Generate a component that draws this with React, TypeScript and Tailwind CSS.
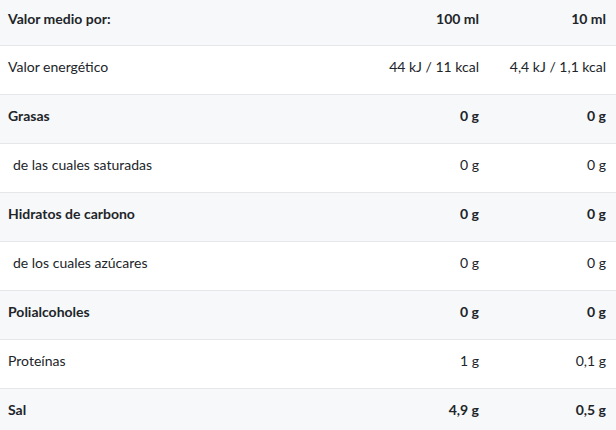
const rows = [
  { label: "Valor medio por:", a: "100 ml", b: "10 ml", bold: true, head: true },
  { label: "Valor energético", a: "44 kJ / 11 kcal", b: "4,4 kJ / 1,1 kcal", bold: false },
  { label: "Grasas", a: "0 g", b: "0 g", bold: true },
  { label: "de las cuales saturadas", a: "0 g", b: "0 g", bold: false, sub: true },
  { label: "Hidratos de carbono", a: "0 g", b: "0 g", bold: true },
  { label: "de los cuales azúcares", a: "0 g", b: "0 g", bold: false, sub: true },
  { label: "Polialcoholes", a: "0 g", b: "0 g", bold: true },
  { label: "Proteínas", a: "1 g", b: "0,1 g", bold: false },
  { label: "Sal", a: "4,9 g", b: "0,5 g", bold: true },
];

export default function App() {
  return (
    <div className="w-[616px] h-[430px] overflow-hidden bg-white font-['Lato','Liberation_Sans',sans-serif] text-[14px] leading-5 text-[#212529]">
      {rows.map((r, i) => (
        <div
          key={r.label}
          className={`grid grid-cols-[1fr_140px_127px] items-center border-b border-[#e6e7eb] ${
            i % 2 === 0 ? "bg-[#f7f8fa]" : "bg-white"
          } ${r.head ? "h-[46px] pb-[8px]" : "h-[49px] pb-[6px]"} ${r.bold ? "font-bold" : ""}`}
        >
          <div className={r.sub ? "pl-[13px]" : "pl-[8px]"}>{r.label}</div>
          <div className="pr-[10px] text-right">{r.a}</div>
          <div className="pr-[10px] text-right">{r.b}</div>
        </div>
      ))}
    </div>
  );
}
